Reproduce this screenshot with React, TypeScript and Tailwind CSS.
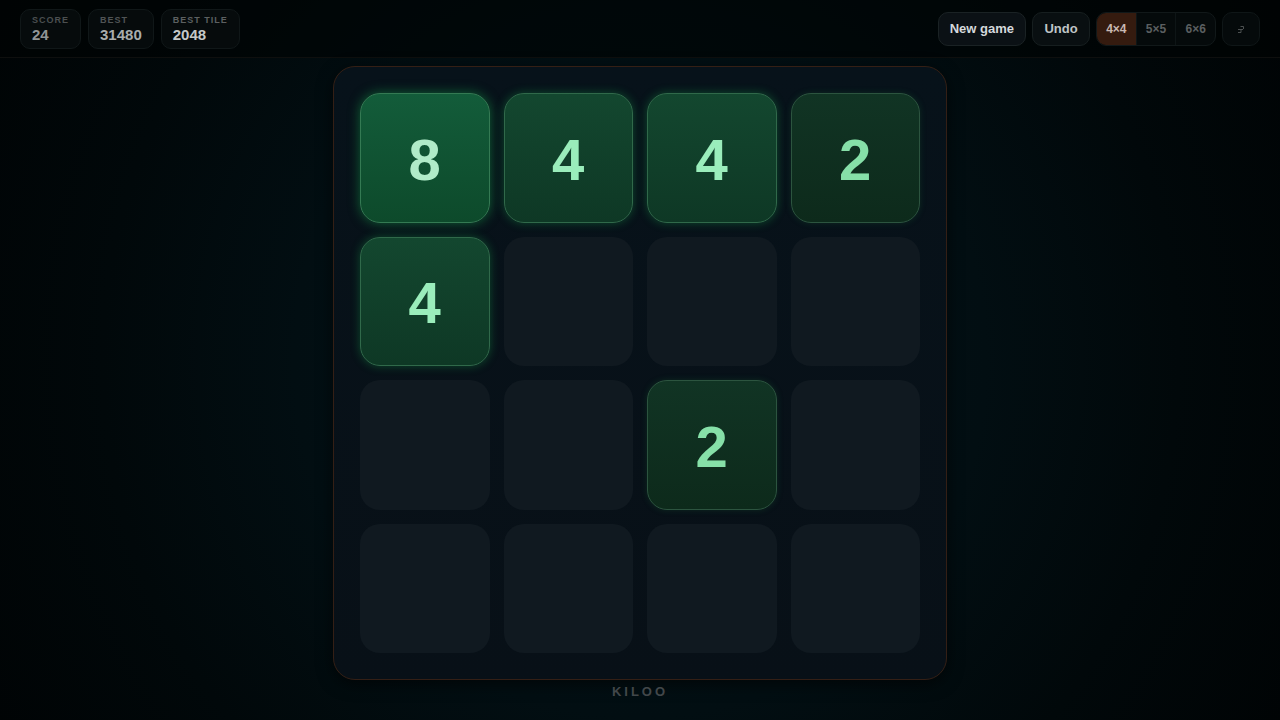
import { useState } from "react";
import clsx from "clsx";

const stats = [
  { label: "Score", value: 24, labelColor: "text-[#4b4f50]", valueColor: "text-[#919596]" },
  { label: "Best", value: 31480, labelColor: "text-[#505455]", valueColor: "text-[#a9adad]" },
  { label: "Best tile", value: 2048, labelColor: "text-[#5c6061]", valueColor: "text-[#c5c8c8]" },
];

const sizes = [4, 5, 6];

const board = [
  [8, 4, 4, 2],
  [4, 0, 0, 0],
  [0, 0, 2, 0],
  [0, 0, 0, 0],
];

const tileStyles: Record<number, string> = {
  2: "border-[#2c543f] bg-linear-to-b from-[#113424] to-[#0d2a1b] text-[#86e0a8] shadow-[0_0_6px_rgba(22,101,52,0.3)]",
  4: "border-[#30694a] bg-linear-to-b from-[#13472f] to-[#0e3825] text-[#9aedbb] shadow-[0_0_10px_rgba(22,163,74,0.4)]",
  8: "border-[#347a53] bg-linear-to-b from-[#135c3a] to-[#0d4a2b] text-[#b0ebc8] shadow-[0_0_12px_rgba(22,163,74,0.55)]",
};

function Tile({ value }: { value: number }) {
  if (!value) {
    return <div className="rounded-[20px] bg-[#101920]" />;
  }
  return (
    <div
      className={clsx(
        "flex items-center justify-center rounded-[20px] border pt-1 text-[58px] leading-none font-bold",
        tileStyles[value]
      )}
    >
      {value}
    </div>
  );
}

function Header() {
  const [size, setSize] = useState(4);

  return (
    <header className="flex items-center justify-between border-b border-[#0e0f0e] bg-[#000304]/60 px-5 pt-[9px] pb-2">
      {/* Stats */}
      <dl className="flex gap-[7px]">
        {stats.map((s) => (
          <div
            key={s.label}
            className="flex h-10 flex-col rounded-[10px] border border-[#101718] bg-[#060b0c] px-[11px] pt-[5px]"
          >
            <dt className={clsx("text-[9px] leading-[11px] font-bold tracking-[1px] uppercase", s.labelColor)}>
              {s.label}
            </dt>
            <dd className={clsx("text-[15px] leading-[18px] font-bold", s.valueColor)}>{s.value}</dd>
          </div>
        ))}
      </dl>

      {/* Controls */}
      <div className="flex gap-1.5">
        <button className="h-[34px] rounded-[10px] border border-[#1a2224] bg-[#0b1115] px-[11px] text-[13px] font-bold text-[#d5d9dc]">
          New game
        </button>
        <button className="h-[34px] w-[58px] rounded-[10px] border border-[#161e1f] bg-[#090f11] text-[13px] font-bold text-[#bfc4c6]">
          Undo
        </button>
        <div className="flex h-[34px] w-[120px] overflow-hidden rounded-[10px] border border-[#111819] bg-[#050a0b]">
          {sizes.map((n) => (
            <button
              key={n}
              onClick={() => setSize(n)}
              className={clsx(
                "flex-1 border-r border-[#0e1516] text-[12px] font-bold last:border-r-0",
                size === n ? "bg-[#351b0f] text-[#c9b9b2]" : "text-[#5b5f60]"
              )}
            >
              {n}×{n}
            </button>
          ))}
        </div>
        <button
          aria-label="Sound"
          className="flex h-[34px] w-[38px] items-center justify-center rounded-[10px] border border-[#0f1617] bg-[#050a0b] text-[#4c5051]"
        >
          <svg viewBox="0 0 10 10" className="size-2.5" fill="none" stroke="currentColor">
            <path d="M4.5 2.5H7.5V5M2 5.5H7M5 5.5V8.5H2" />
          </svg>
        </button>
      </div>
    </header>
  );
}

export default function App() {
  return (
    <div className="flex min-h-screen flex-col bg-[#000506] bg-[radial-gradient(ellipse_60%_110%_at_center,#02141a_0%,#020e12_45%,#01080a_70%,#000304_100%)] font-['Liberation_Sans',Arial,sans-serif]">
      <Header />
      <main className="flex flex-1 flex-col items-center pt-2">
        <div className="grid aspect-square w-[calc(100vh-106px)] max-w-full grid-cols-4 grid-rows-4 gap-3.5 rounded-[22px] border border-[#341f15] bg-linear-to-b from-[#07121a] to-[#081017] p-[26px] shadow-[0_4px_16px_rgba(0,0,0,0.6)]">
          {board.flat().map((value, i) => (
            <Tile key={i} value={value} />
          ))}
        </div>
        <footer className="pt-1 text-[13px] leading-4 font-bold tracking-[3px] text-[#42474a]">KILOO</footer>
      </main>
    </div>
  );
}
